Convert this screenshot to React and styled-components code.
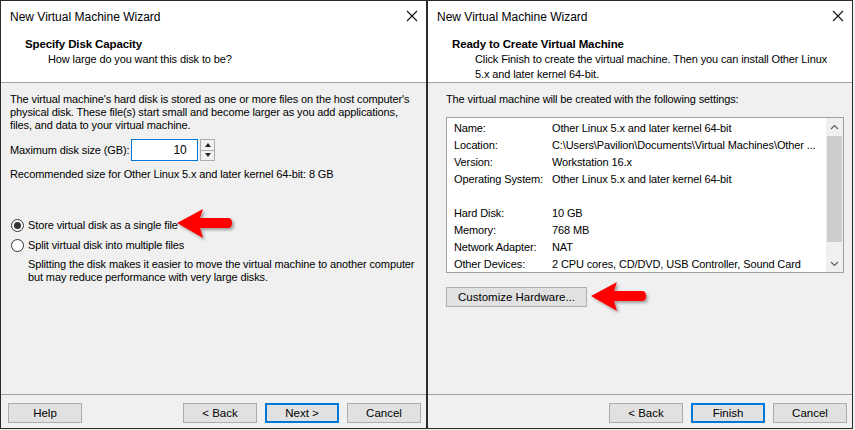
import React from 'react'
import styled, { createGlobalStyle } from 'styled-components'

const GlobalStyle = createGlobalStyle`
    html, body {
        margin: 0;
        padding: 0;
        background: #f0f0f0;
    }
    * {
        box-sizing: border-box;
    }
`;

const Page = styled.div`
    width: 855px;
    height: 430px;
    display: flex;
    position: relative;
    font-family: "Liberation Sans", Arial, sans-serif;
    font-size: 11px;
    letter-spacing: -0.12px;
    color: #000;
    overflow: hidden;
    white-space: nowrap;
`;

const Window = styled.div`
    width: ${p => p.w}px;
    height: 429px;
    border: 1px solid #2b2b2b;
    display: flex;
    flex-direction: column;
    background: #f0f0f0;
`;

const TitleBar = styled.div`
    height: 30px;
    background: #fff;
    display: flex;
    align-items: center;
    justify-content: space-between;
    padding: 0 8px 0 9px;
`;

const TitleText = styled.span`
    font-size: 12px;
    letter-spacing: 0;
    padding-top: 1px;
`;

const CloseIcon = styled.svg`
    width: 12px;
    height: 12px;
`;

const Header = styled.div`
    height: 52px;
    background: #fff;
    border-bottom: 1px solid #a0a0a0;
    padding: 6px 0 0 ${p => p.pad}px;
`;

const HeaderTitle = styled.div`
    font-weight: bold;
    font-size: 11.5px;
    line-height: 15px;
`;

const HeaderSub = styled.div`
    line-height: 15px;
    padding-left: 23px;
`;

const Body = styled.div`
    flex: 1;
    padding: ${p => p.pt}px ${p => p.pr}px 0 ${p => p.pl}px;
    border-bottom: 1px solid #a0a0a0;
`;

const Para = styled.p`
    margin: 0;
    line-height: 13px;
`;

const DiskRow = styled.div`
    display: flex;
    align-items: center;
    margin-top: 7px;
`;

const NumInput = styled.div`
    width: 67px;
    height: 22px;
    margin-left: 2px;
    background: #fff;
    border: 1px solid #0078d7;
    display: flex;
    align-items: center;
    justify-content: flex-end;
    padding-right: 11px;
    font-size: 12px;
`;

const Spinner = styled.div`
    width: 15px;
    height: 22px;
    margin-left: 2px;
    display: flex;
    flex-direction: column;
    border: 1px solid #acacac;
    background: #fff;
`;

const SpinHalf = styled.div`
    flex: 1;
    display: flex;
    align-items: center;
    justify-content: center;
    background: #f0f0f0;
    border-top: ${p => (p.bottom ? '1px solid #acacac' : 'none')};
`;

const Tri = styled.div`
    width: 0;
    height: 0;
    border-left: 3px solid transparent;
    border-right: 3px solid transparent;
    ${p => (p.down ? 'border-top: 4px solid #222;' : 'border-bottom: 4px solid #222;')}
`;

const Note = styled.div`
    margin-top: ${p => p.mt}px;
    line-height: 13px;
`;

const RadioRow = styled.label`
    display: flex;
    align-items: center;
    height: 20px;
    margin-top: ${p => p.mt}px;
`;

const RadioDot = styled.span`
    width: 13px;
    height: 13px;
    border-radius: 50%;
    border: 1px solid #333;
    background: #fff;
    display: flex;
    align-items: center;
    justify-content: center;
    margin: 0 4px 0 1px;
    &::after {
        content: '';
        width: 7px;
        height: 7px;
        border-radius: 50%;
        background: ${p => (p.checked ? '#333' : 'transparent')};
    }
`;

const Indented = styled.p`
    margin: 3px 0 0 18px;
    line-height: 13px;
`;

const ListBox = styled.div`
    margin-top: 11px;
    height: 156px;
    border: 1px solid #a0a0a0;
    background: #fff;
    display: flex;
`;

const Rows = styled.div`
    flex: 1;
    padding: 2px 0 0 7px;
`;

const Row = styled.div`
    display: grid;
    grid-template-columns: 98px 1fr;
    height: 17px;
    line-height: 17px;
`;

const ScrollBar = styled.div`
    width: 17px;
    display: flex;
    flex-direction: column;
    background: #f0f0f0;
`;

const ScrollBtn = styled.div`
    height: 17px;
    display: flex;
    align-items: center;
    justify-content: center;
`;

const Thumb = styled.div`
    height: 106px;
    margin: 1px 1px;
    background: #cdcdcd;
`;

const Track = styled.div`
    flex: 1;
`;

const Button = styled.button`
    width: ${p => p.w || 74}px;
    height: 20px;
    font-family: inherit;
    font-size: 11.5px;
    color: #000;
    background: #e1e1e1;
    border: ${p => (p.primary ? '2px solid #0078d7' : '1px solid #adadad')};
    padding: 0;
    margin-top: ${p => p.mt || 0}px;
`;

const Footer = styled.div`
    height: 33px;
    display: flex;
    align-items: flex-start;
    gap: 8px;
    padding: 8px ${p => p.pr}px 0 7px;
`;

const Spacer = styled.div`
    flex: 1;
`;

const ArrowSvg = styled.svg`
    position: absolute;
    left: ${p => p.x}px;
    top: ${p => p.y}px;
    overflow: visible;
`;

const Close = () => (
    <CloseIcon viewBox="0 0 12 12">
        <path d="M1 1 L11 11 M11 1 L1 11" stroke="#111" strokeWidth="1.1" />
    </CloseIcon>
);

const Arrow = ({ x, y }) => (
    <ArrowSvg x={x} y={y} width="60" height="32" viewBox="0 0 60 32">
        <defs>
            <filter id="sh" x="-20%" y="-20%" width="150%" height="160%">
                <feDropShadow dx="2" dy="2" stdDeviation="1.5" floodColor="#000" floodOpacity="0.35" />
            </filter>
        </defs>
        <path
            d="M0 15 L26 1 L23 10 L51 10 Q55 10 55 15 Q55 20 51 20 L23 20 L26 30 Z"
            fill="#ff0000"
            filter="url(#sh)"
        />
    </ArrowSvg>
);

const settings = [
    ['Name:', 'Other Linux 5.x and later kernel 64-bit'],
    ['Location:', 'C:\\Users\\Pavilion\\Documents\\Virtual Machines\\Other ...'],
    ['Version:', 'Workstation 16.x'],
    ['Operating System:', 'Other Linux 5.x and later kernel 64-bit'],
    ['', ''],
    ['Hard Disk:', '10 GB'],
    ['Memory:', '768 MB'],
    ['Network Adapter:', 'NAT'],
    ['Other Devices:', '2 CPU cores, CD/DVD, USB Controller, Sound Card'],
];

function App() {
    return (
        <Page>
            <GlobalStyle />
            <Window w={427}>
                <TitleBar>
                    <TitleText>New Virtual Machine Wizard</TitleText>
                    <Close />
                </TitleBar>
                <Header pad={24}>
                    <HeaderTitle>Specify Disk Capacity</HeaderTitle>
                    <HeaderSub>How large do you want this disk to be?</HeaderSub>
                </Header>
                <Body pt={10} pl={9} pr={9}>
                    <Para>
                        The virtual machine's hard disk is stored as one or more files on the host computer's<br />
                        physical disk. These file(s) start small and become larger as you add applications,<br />
                        files, and data to your virtual machine.
                    </Para>
                    <DiskRow>
                        <span>Maximum disk size (GB):</span>
                        <NumInput>10</NumInput>
                        <Spinner>
                            <SpinHalf><Tri /></SpinHalf>
                            <SpinHalf bottom><Tri down /></SpinHalf>
                        </Spinner>
                    </DiskRow>
                    <Note mt={7}>Recommended size for Other Linux 5.x and later kernel 64-bit: 8 GB</Note>
                    <RadioRow mt={34}>
                        <RadioDot checked />
                        Store virtual disk as a single file
                    </RadioRow>
                    <RadioRow mt={0}>
                        <RadioDot />
                        Split virtual disk into multiple files
                    </RadioRow>
                    <Indented>
                        Splitting the disk makes it easier to move the virtual machine to another computer<br />
                        but may reduce performance with very large disks.
                    </Indented>
                </Body>
                <Footer pr={5}>
                    <Button>Help</Button>
                    <Spacer />
                    <Button>&lt; Back</Button>
                    <Button primary>Next &gt;</Button>
                    <Button>Cancel</Button>
                </Footer>
            </Window>
            <Window w={426}>
                <TitleBar>
                    <TitleText>New Virtual Machine Wizard</TitleText>
                    <Close />
                </TitleBar>
                <Header pad={24}>
                    <HeaderTitle>Ready to Create Virtual Machine</HeaderTitle>
                    <HeaderSub>
                        Click Finish to create the virtual machine. Then you can install Other Linux<br />
                        5.x and later kernel 64-bit.
                    </HeaderSub>
                </Header>
                <Body pt={10} pl={18} pr={8}>
                    <Para>The virtual machine will be created with the following settings:</Para>
                    <ListBox>
                        <Rows>
                            {settings.map(([k, v], i) => (
                                <Row key={i}>
                                    <span>{k}</span>
                                    <span>{v}</span>
                                </Row>
                            ))}
                        </Rows>
                        <ScrollBar>
                            <ScrollBtn>
                                <svg width="9" height="6" viewBox="0 0 9 6">
                                    <path d="M1 5 L4.5 1.5 L8 5" fill="none" stroke="#606060" strokeWidth="1.2" />
                                </svg>
                            </ScrollBtn>
                            <Thumb />
                            <Track />
                            <ScrollBtn>
                                <svg width="9" height="6" viewBox="0 0 9 6">
                                    <path d="M1 1 L4.5 4.5 L8 1" fill="none" stroke="#606060" strokeWidth="1.2" />
                                </svg>
                            </ScrollBtn>
                        </ScrollBar>
                    </ListBox>
                    <Button w={141} mt={14}>Customize Hardware...</Button>
                </Body>
                <Footer pr={5}>
                    <Spacer />
                    <Button>&lt; Back</Button>
                    <Button primary>Finish</Button>
                    <Button>Cancel</Button>
                </Footer>
            </Window>
            <Arrow x={177} y={208} />
            <Arrow x={591} y={281} />
        </Page>
    )
}

export default App
